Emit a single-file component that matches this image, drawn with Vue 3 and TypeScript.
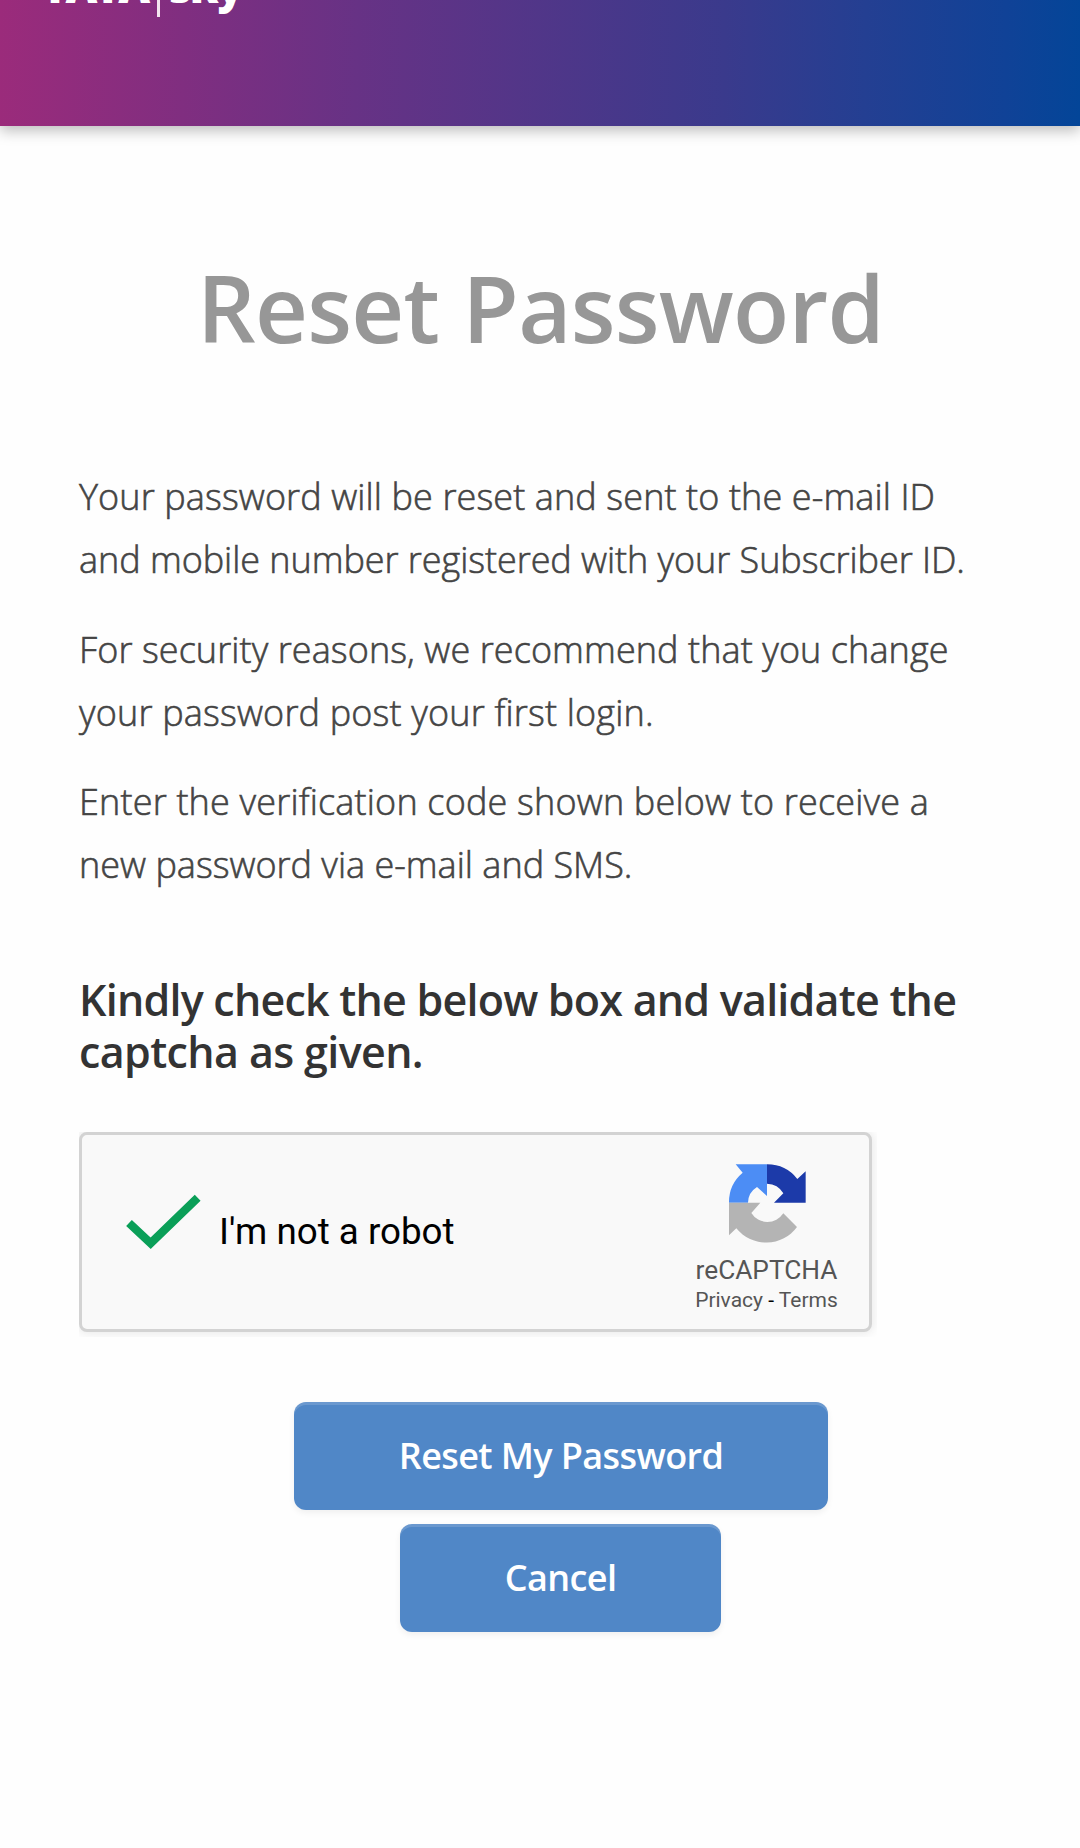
<script setup lang="ts">
interface Line {
  text: string
  spacing: number
}

const paragraphs: Line[][] = [
  [
    { text: 'Your password will be reset and sent to the e-mail ID', spacing: 0.11 },
    { text: 'and mobile number registered with your Subscriber ID.', spacing: -0.05 },
  ],
  [
    { text: 'For security reasons, we recommend that you change', spacing: 0.09 },
    { text: 'your password post your first login.', spacing: 0.18 },
  ],
  [
    { text: 'Enter the verification code shown below to receive a', spacing: 0.18 },
    { text: 'new password via e-mail and SMS.', spacing: 0 },
  ],
]

const notice: Line[] = [
  { text: 'Kindly check the below box and validate the', spacing: -0.77 },
  { text: 'captcha as given.', spacing: -0.62 },
]
</script>

<template>
  <div class="page">
    <header class="header">
      <div class="brand">
        <span class="tata">TATA</span>
        <span class="divider"></span>
        <span class="sky">sky</span>
      </div>
    </header>

    <main class="content">
      <h1 class="title">Reset Password</h1>

      <p v-for="(lines, i) in paragraphs" :key="i" class="para">
        <span
          v-for="line in lines"
          :key="line.text"
          class="line"
          :style="{ letterSpacing: line.spacing + 'px' }"
        >{{ line.text }}</span>
      </p>

      <h3 class="notice">
        <span
          v-for="line in notice"
          :key="line.text"
          class="line"
          :style="{ letterSpacing: line.spacing + 'px' }"
        >{{ line.text }}</span>
      </h3>

      <div class="captcha-frame">
        <div class="captcha">
          <svg class="check" viewBox="0 0 330 270" width="110" height="90">
            <path d="M57 129 L122 190 L263 53" fill="none" stroke="#0a9f58" stroke-width="25" />
          </svg>
          <span class="robot">I'm not a robot</span>
          <div class="badge">
            <svg class="logo" viewBox="141 66 240 246" width="80" height="82">
              <path fill="#4c8df5" d="M147 188A115 115 0 0 1 188 98L167 73H261V168L231 141A57 57 0 0 0 204 188Z" />
              <path fill="#1c3aa9" d="M261 73A115 115 0 0 1 352 117L377 94V188H282L310 160A57 57 0 0 0 261 131Z" />
              <path fill="#b4b4b4" d="M147 188H241L214 219A57 57 0 0 0 310 220L351 261A115 115 0 0 1 169 265L147 286Z" />
            </svg>
            <div class="badge-name">reCAPTCHA</div>
            <div class="badge-links"><span>Privacy</span> <i>-</i> <span>Terms</span></div>
          </div>
        </div>
      </div>

      <div class="actions">
        <button class="btn primary" type="button">Reset My Password</button>
        <button class="btn cancel" type="button">Cancel</button>
      </div>
    </main>
  </div>
</template>

<style>
body {
  background: #fefefe;
}
</style>

<style scoped>
.page {
  box-sizing: border-box;
  width: 1080px;
  height: 1848px;
  overflow: hidden;
  background: #fefefe;
  font-family: 'Open Sans', 'Noto Sans', sans-serif;
}

.header {
  height: 126px;
  background: linear-gradient(91deg, #9b2b7b 0%, #802e80 17%, #673285 33%, #3a3a8c 67%, #243f92 80%, #104297 93%, #034598 100%);
  box-shadow: 0 5px 13px rgba(0, 0, 0, 0.25);
}

.brand {
  display: flex;
  align-items: flex-end;
  height: 17px;
  padding-left: 42px;
  overflow: hidden;
  color: #fff;
  white-space: nowrap;
}

.tata {
  width: 115px;
  margin-bottom: 1px;
  font-size: 44px;
  font-weight: 800;
  line-height: 60px;
  letter-spacing: -2.6px;
}

.divider {
  width: 3px;
  height: 17px;
  background: #f3e4ef;
}

.sky {
  margin-left: 9px;
  margin-bottom: 1px;
  font-size: 44px;
  font-weight: 800;
  line-height: 60px;
  letter-spacing: -2px;
}

.content {
  display: flex;
  flex-direction: column;
  padding: 0 79px;
}

.title {
  margin: 116.5px 0 0;
  height: 133.5px;
  padding-left: 1px;
  color: #979797;
  font-size: 92px;
  font-weight: 600;
  line-height: 130px;
  letter-spacing: -0.75px;
  text-align: center;
  white-space: nowrap;
}

.para {
  margin: 89px 0 0;
  color: #444;
  font-size: 36px;
  font-weight: 300;
  line-height: 63px;
  -webkit-text-stroke: 0.6px #444;
}

.para + .para {
  margin-top: 26.5px;
}

.line {
  display: block;
  white-space: nowrap;
}

.notice {
  margin: 78px 0 0;
  color: #333;
  font-size: 43px;
  font-weight: 600;
  line-height: 52px;
}

.captcha-frame {
  width: 798px;
  height: 205px;
  margin-top: 54px;
  overflow: hidden;
}

.captcha {
  box-sizing: border-box;
  display: flex;
  width: 793px;
  height: 200px;
  border: 3px solid #d3d3d3;
  border-radius: 8px;
  background: #f9f9f9;
  box-shadow: 0 0 10px 2px rgba(0, 0, 0, 0.08);
  font-family: Roboto, sans-serif;
}

.check {
  margin: 45px 0 0 28px;
}

.robot {
  margin: 75px 0 0 -1px;
  color: #000;
  font-size: 36.75px;
  line-height: 44px;
  white-space: nowrap;
}

.badge {
  width: 150px;
  margin-left: auto;
  margin-right: 27.5px;
  color: #555;
  text-align: center;
}

.logo {
  display: block;
  margin: 27px auto 0;
  padding-left: 1px;
}

.badge-name {
  margin-top: 10.5px;
  font-size: 26.25px;
  line-height: 31px;
}

.badge-links {
  margin-top: 2.5px;
  font-size: 21px;
  line-height: 25px;
  white-space: nowrap;
}

.badge-links i {
  color: #000;
  font-style: normal;
}

.actions {
  display: flex;
  flex-direction: column;
  align-items: center;
  gap: 14px;
  width: 964px;
  margin-top: 65px;
}

.btn {
  height: 108px;
  padding: 0;
  border: 0;
  border-radius: 12px;
  background: #5087c7;
  box-shadow: inset 0 3px 0 rgba(255, 255, 255, 0.15), 0 3px 6px rgba(0, 0, 0, 0.06);
  color: #fff;
  font-family: inherit;
  font-size: 36px;
  font-weight: 600;
  line-height: 108px;
  letter-spacing: -0.6px;
  white-space: nowrap;
}

.primary {
  width: 534px;
}

.cancel {
  width: 321px;
  margin-right: 1px;
}
</style>
